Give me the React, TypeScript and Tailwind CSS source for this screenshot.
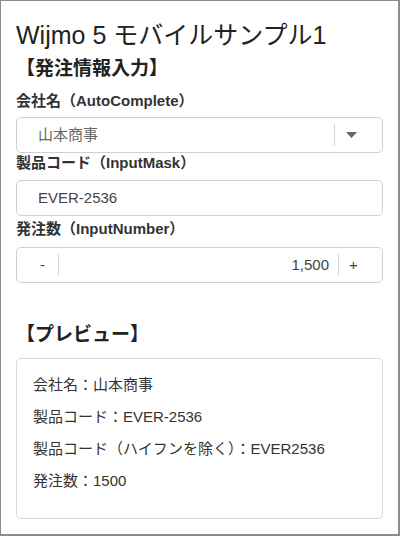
const FONT = "font-['Liberation_Sans','Noto_Sans_CJK_JP',sans-serif]";

function Label({ children }: { children: React.ReactNode }) {
  return <div className="text-[15px] font-bold leading-[20px] text-[#333]">{children}</div>;
}

function Box({ children }: { children: React.ReactNode }) {
  return (
    <div className="flex h-[36px] items-center rounded-[5px] border border-[#cfcfcf] bg-white">
      {children}
    </div>
  );
}

export default function App() {
  const preview = [
    '会社名：山本商事',
    '製品コード：EVER-2536',
    '製品コード（ハイフンを除く）：EVER2536',
    '発注数：1500',
  ];

  return (
    <div
      className={`${FONT} h-[536px] w-[400px] overflow-hidden border-t border-l border-r-2 border-b-2 border-[#8c8c8c] bg-white px-[15px] text-[#222]`}
    >
      <h1 className="pt-[19px] text-[25px] leading-[30px]">Wijmo 5 モバイルサンプル1</h1>
      <h2 className="mt-[7px] text-[19px] font-bold leading-[24px]">【発注情報入力】</h2>

      <div className="mt-[10px]">
        <Label>会社名（AutoComplete）</Label>
      </div>
      <div className="mt-[6px]">
        <Box>
          <span className="flex-1 pl-[21px] text-[15px] text-[#666]">山本商事</span>
          <span className="h-[22px] w-px bg-[#d4d4d4]" />
          <span className="flex w-[47px] items-center pl-[11px]">
            <svg width="11" height="6" viewBox="0 0 11 6">
              <path d="M0 0h11L5.5 6z" fill="#666" />
            </svg>
          </span>
        </Box>
      </div>

      <Label>製品コード（InputMask）</Label>
      <div className="mt-[7px]">
        <Box>
          <span className="pl-[21px] text-[15px] text-[#444]">EVER-2536</span>
        </Box>
      </div>

      <div className="mt-[3px]">
        <Label>発注数（InputNumber）</Label>
      </div>
      <div className="mt-[8px]">
        <Box>
          <span className="w-[41px] pl-[23px] text-[15px] text-[#444]">-</span>
          <span className="h-[22px] w-px bg-[#d4d4d4]" />
          <span className="flex-1 pr-[9px] text-right text-[15px] text-[#444]">1,500</span>
          <span className="h-[22px] w-px bg-[#d4d4d4]" />
          <span className="w-[43px] pl-[10px] text-[15px] text-[#444]">+</span>
        </Box>
      </div>

      <h2 className="mt-[40px] text-[19px] font-bold leading-[24px]">【プレビュー】</h2>

      <div className="mt-[11px] flex h-[161px] flex-col gap-[8px] rounded-[5px] border border-[#d9d9d9] px-[16px] pt-[14px]">
        {preview.map((line) => (
          <div key={line} className="text-[15px] leading-[24px] text-[#333]">
            {line}
          </div>
        ))}
      </div>
    </div>
  );
}
